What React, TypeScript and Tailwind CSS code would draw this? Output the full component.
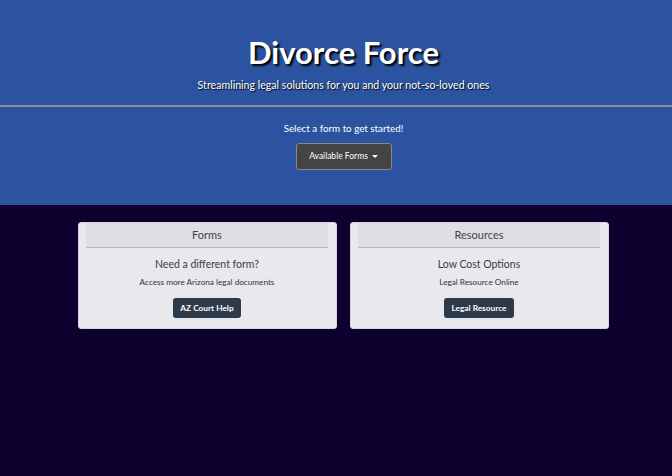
type CardProps = {
  title: string;
  heading: string;
  info: string;
  button: string;
};

function InfoCard({ title, heading, info, button }: CardProps) {
  return (
    <div className="w-[259px] h-[107px] bg-[#e9e8ed] rounded-[3px] border border-[#d6d5db] flex flex-col items-center">
      <div className="w-[242px] h-[25px] bg-[#dfdee3] border-b border-[#b9b8c0] flex items-center justify-center text-[11px] text-[#444]">
        {title}
      </div>
      <div className="mt-[8px] text-[10.5px] text-[#3d3d3d] leading-[16px]">{heading}</div>
      <div className="mt-[4px] text-[8.2px] text-[#333] leading-[12px]">{info}</div>
      <button className="mt-[10px] h-[20px] px-[7px] bg-[#2c3a4b] rounded-[3px] text-white text-[8.3px] font-bold">
        {button}
      </button>
    </div>
  );
}

export default function App() {
  return (
    <div className="min-h-[476px] bg-[#0d0130] font-['Lato','Noto_Sans',sans-serif]">
      <header className="h-[205px] bg-[#2c53a0] flex flex-col">
        <div className="pl-[15px] pt-[34px] flex flex-col items-center">
          <h1 className="text-[31px] leading-[37px] font-bold text-white [text-shadow:2px_2px_2px_#000]">
            Divorce Force
          </h1>
          <p className="mt-[7px] text-[10.6px] leading-[14px] text-white [text-shadow:1px_1px_1px_#000]">
            Streamlining legal solutions for you and your not-so-loved ones
          </p>
        </div>
        <div className="mt-[13px] h-[2px] bg-[#8b8fa3]" />
        <div className="pl-[15px] pt-[15px] flex flex-col items-center">
          <p className="text-[9.8px] leading-[13px] text-white">Select a form to get started!</p>
          <button className="mt-[8px] w-[96px] h-[27px] bg-[#444444] border border-[#8a8a8a] rounded-[3px] text-white text-[8.5px] flex items-center justify-center gap-[4px]">
            Available Forms
            <span className="w-0 h-0 border-l-[3px] border-r-[3px] border-t-[3px] border-l-transparent border-r-transparent border-t-white" />
          </button>
        </div>
      </header>
      <main className="pl-[14px] pt-[17px] flex justify-center gap-[13px]">
        <InfoCard
          title="Forms"
          heading="Need a different form?"
          info="Access more Arizona legal documents"
          button="AZ Court Help"
        />
        <InfoCard
          title="Resources"
          heading="Low Cost Options"
          info="Legal Resource Online"
          button="Legal Resource"
        />
      </main>
    </div>
  );
}
